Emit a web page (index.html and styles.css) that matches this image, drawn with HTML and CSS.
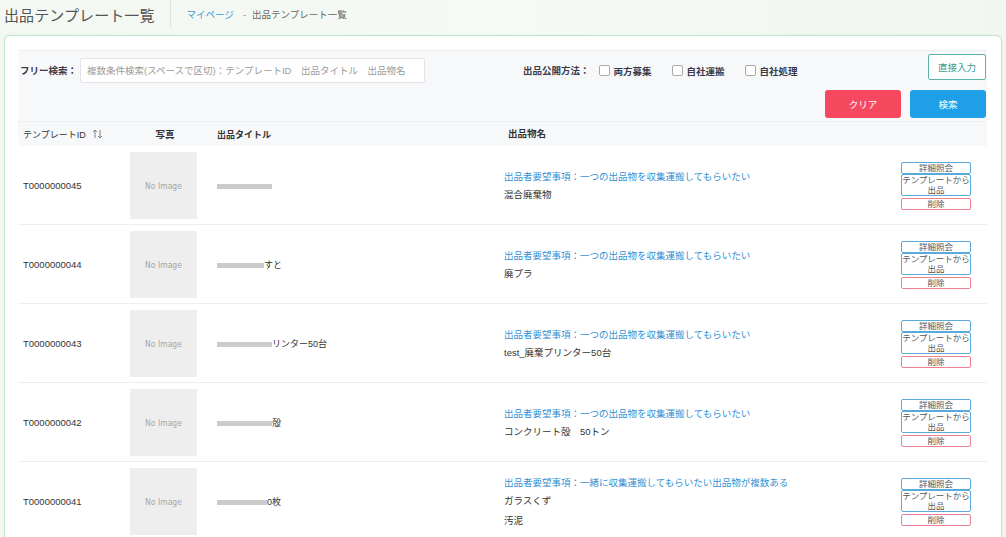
FILE: index.html
```html
<!DOCTYPE html>
<html lang="ja">
<head>
<meta charset="utf-8">
<title>出品テンプレート一覧</title>
<link rel="stylesheet" href="styles.css">
</head>
<body>
<div class="page">
  <header class="page-header">
    <h1 class="page-title">出品テンプレート一覧</h1>
    <nav class="crumbs"><a class="crumb-link">マイページ</a><span class="crumb-sep">-</span><span class="crumb-cur">出品テンプレート一覧</span></nav>
  </header>

  <section class="card">
    <div class="search">
      <div class="search-row">
        <label class="s-label">フリー検索：</label>
        <div class="s-input">複数条件検索(スペースで区切)：テンプレートID　出品タイトル　出品物名</div>
        <div class="filters">
          <span class="s-label">出品公開方法：</span>
          <span class="chk"><span class="box"></span>両方募集</span>
          <span class="chk"><span class="box"></span>自社運搬</span>
          <span class="chk"><span class="box"></span>自社処理</span>
        </div>
        <button class="btn-direct">直接入力</button>
      </div>
      <div class="search-actions">
        <button class="btn btn-clear">クリア</button>
        <button class="btn btn-search">検索</button>
      </div>
    </div>

    <div class="table">
      <div class="thead grid">
        <div class="c-id">テンプレートID <svg class="sort" width="11" height="10" viewBox="0 0 11 10"><path d="M3 9V1M1 3l2-2 2 2M8 1v8M6 7l2 2 2-2" fill="none" stroke="#777" stroke-width="0.9"/></svg></div>
        <div class="c-photo h-photo">写真</div>
        <div class="c-title h-b">出品タイトル</div>
        <div class="c-name h-b h-name">出品物名</div>
        <div></div>
      </div>

      <div class="row grid">
        <div class="c-id">T0000000045</div>
        <div class="c-photo"><div class="noimg">No Image</div></div>
        <div class="c-title"><span class="redact w55"></span></div>
        <div class="c-name"><div class="req">出品者要望事項：一つの出品物を収集運搬してもらいたい</div><div>混合廃棄物</div></div>
        <div class="c-act"><span class="ab ab-blue">詳細照会</span><span class="ab ab-blue">テンプレートから<br>出品</span><span class="ab ab-red">削除</span></div>
      </div>

      <div class="row grid">
        <div class="c-id">T0000000044</div>
        <div class="c-photo"><div class="noimg">No Image</div></div>
        <div class="c-title"><span class="redact w47"></span>すと</div>
        <div class="c-name"><div class="req">出品者要望事項：一つの出品物を収集運搬してもらいたい</div><div>廃プラ</div></div>
        <div class="c-act"><span class="ab ab-blue">詳細照会</span><span class="ab ab-blue">テンプレートから<br>出品</span><span class="ab ab-red">削除</span></div>
      </div>

      <div class="row grid">
        <div class="c-id">T0000000043</div>
        <div class="c-photo"><div class="noimg">No Image</div></div>
        <div class="c-title"><span class="redact w55"></span>リンター50台</div>
        <div class="c-name"><div class="req">出品者要望事項：一つの出品物を収集運搬してもらいたい</div><div>test_廃棄プリンター50台</div></div>
        <div class="c-act"><span class="ab ab-blue">詳細照会</span><span class="ab ab-blue">テンプレートから<br>出品</span><span class="ab ab-red">削除</span></div>
      </div>

      <div class="row grid">
        <div class="c-id">T0000000042</div>
        <div class="c-photo"><div class="noimg">No Image</div></div>
        <div class="c-title"><span class="redact w55"></span>殻</div>
        <div class="c-name"><div class="req">出品者要望事項：一つの出品物を収集運搬してもらいたい</div><div>コンクリート殻　50トン</div></div>
        <div class="c-act"><span class="ab ab-blue">詳細照会</span><span class="ab ab-blue">テンプレートから<br>出品</span><span class="ab ab-red">削除</span></div>
      </div>

      <div class="row grid">
        <div class="c-id">T0000000041</div>
        <div class="c-photo"><div class="noimg">No Image</div></div>
        <div class="c-title"><span class="redact w50"></span>0枚</div>
        <div class="c-name"><div class="req">出品者要望事項：一緒に収集運搬してもらいたい出品物が複数ある</div><div>ガラスくず</div><div class="l3">汚泥</div></div>
        <div class="c-act"><span class="ab ab-blue">詳細照会</span><span class="ab ab-blue">テンプレートから<br>出品</span><span class="ab ab-red">削除</span></div>
      </div>
    </div>
  </section>
</div>
</body>
</html>
```

FILE: styles.css
```css
* { box-sizing: border-box; }
html, body { margin: 0; padding: 0; }
body {
  background: linear-gradient(90deg, #f3f8f2 0%, #f6f9f5 50%, #f1f7f0 100%);
  font-family: "Liberation Sans", "Noto Sans CJK JP", sans-serif;
  color: #333;
  font-size: 9.5px;
  height: 537px;
  overflow: hidden;
}
.page { padding: 0 4px 0 4px; }

.page-header { display: flex; align-items: flex-start; height: 28px; }
.page-title {
  margin: 0;
  font-size: 15px;
  font-weight: normal;
  color: #555;
  height: 28px;
  padding-top: 3px;
  line-height: 25px;
  padding-right: 15px;
  border-right: 1px solid #e0e7df;
  letter-spacing: 0.1px;
}
.crumbs { padding-left: 16px; display: flex; align-items: center; height: 28px; font-size: 9.5px; }
.crumb-link { color: #3a9ad9; }
.crumb-sep { color: #888; margin: 0 6px 0 9px; }
.crumb-cur { color: #666; }

.card {
  margin-top: 7px;
  background: #fff;
  border: 1px solid #c2e6d1;
  border-radius: 6px;
  padding: 14px 14px 0 13px;
  height: 520px;
  box-shadow: 0 0 2px rgba(150, 210, 180, 0.3);
}

.search {
  background: #f7f8fa;
  border-top: 1px solid #eceef0;
  padding: 3px 1px 3px 2px;
}
.search-row { display: flex; align-items: flex-start; height: 30px; }
.s-label {
  font-weight: bold;
  font-size: 9.5px;
  color: #3a3a4a;
  height: 25px;
  line-height: 25px;
  margin-top: 4px;
  white-space: nowrap;
}
.search-row > .s-label { width: 60px; }
.s-input {
  margin-top: 4px;
  width: 345px;
  height: 25px;
  line-height: 23px;
  border: 1px solid #e2e4e8;
  border-radius: 2px;
  background: #fff;
  padding-left: 6px;
  color: #9a9a9a;
  font-size: 9.5px;
  white-space: nowrap;
  overflow: hidden;
}
.filters { display: flex; align-items: center; margin-left: 98px; }
.filters .s-label { margin-right: 9px; }
.chk {
  display: flex; align-items: center;
  font-weight: bold; font-size: 9.5px; color: #3a3a4a;
  margin-top: 4px; height: 25px; margin-right: 20px;
}
.box {
  width: 11px; height: 11px;
  border: 1px solid #a9a9a9; border-radius: 2px;
  background: #fff; margin-right: 4px;
}
.btn-direct {
  margin-left: auto;
  width: 58px; height: 26px;
  border: 1px solid #5cb4a6;
  border-radius: 2px;
  background: #fff;
  color: #3a9e8f;
  font-family: inherit;
  font-size: 9.5px;
  padding: 0;
}
.search-actions { display: flex; justify-content: flex-end; gap: 9px; margin-top: 6px; }
.btn {
  width: 76px; height: 28px;
  border: none; border-radius: 3px;
  color: #fff; font-family: inherit; font-size: 9.5px; padding: 0;
}
.btn-clear { background: #f6485f; }
.btn-search { background: #1f9fe7; }

.grid { display: grid; grid-template-columns: 112px 87px 287px 1fr 86px; align-items: center; }
.thead {
  background: #f7f8fa;
  border-top: 1px solid #eceef0;
  height: 25px;
  font-size: 9.5px;
  color: #333;
}
.thead .c-id { display: flex; align-items: center; font-size: 9px; }
.sort { margin-left: 6px; }
.h-photo { width: 67px; text-align: center; font-weight: bold; padding-left: 3px; }
.h-b { font-weight: bold; }
.h-name { padding-left: 4px; }

.c-id { padding-left: 5px; }
.row {
  padding: 6px 0 5px;
  border-bottom: 1px solid #eeeeee;
  min-height: 79px;
}
.row .c-id { font-size: 9.5px; color: #333; }
.noimg {
  width: 67px; height: 67px;
  background: #eeeeee;
  display: flex; align-items: center; justify-content: center;
  color: #a6a6a6;
  font-family: "Liberation Sans Narrow", "DejaVu Sans Condensed", "Liberation Sans", sans-serif;
  font-size: 8.5px;
}
.c-title { font-size: 9px; color: #333; padding-left: 0; }
.redact {
  display: inline-block;
  height: 5px;
  background: #cbcbcb;
  vertical-align: middle;
  filter: blur(0.6px);
}
.w47 { width: 47px; }
.w50 { width: 50px; }
.w55 { width: 55px; }
.c-name { font-size: 9.5px; line-height: 18px; color: #333; }
.req { color: #3390d4; }
.l3 { margin-top: 2px; }
.c-act { display: flex; flex-direction: column; width: 70px; }
.ab {
  display: block;
  width: 70px;
  border: 1px solid;
  border-radius: 2px;
  background: #fff;
  text-align: center;
  font-size: 8.5px;
  line-height: 10px;
  color: #555;
  white-space: nowrap;
}
.ab-blue { border-color: #5aa9dc; }
.ab-red { border-color: #ef8094; margin-top: 2px; }
```
